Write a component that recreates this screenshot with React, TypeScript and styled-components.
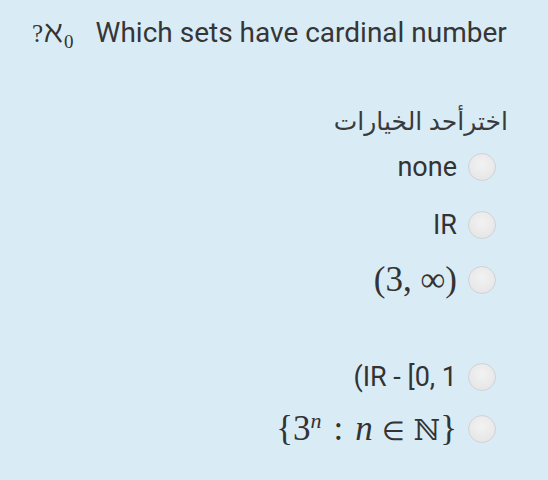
import styled, { createGlobalStyle } from 'styled-components';

const GlobalStyle = createGlobalStyle`
  html, body {
    margin: 0;
    padding: 0;
    background: #d9ecf6;
  }
`;

const Page = styled.div`
  width: 548px;
  height: 480px;
  background: #d9ecf6;
  font-family: Roboto, 'Liberation Sans', sans-serif;
  color: #333;
  overflow: hidden;
`;

const Question = styled.div`
  display: flex;
  align-items: baseline;
  padding: 15px 0 0 32px;
  font-size: 28px;
  line-height: 32px;
  color: #363636;
`;

const Aleph = styled.span`
  font-family: 'DejaVu Serif', 'Liberation Serif', serif;
  font-size: 31px;
  line-height: 32px;
  margin-right: 22px;
  color: #333;

  small {
    font-family: 'Liberation Serif', serif;
    font-size: 25px;
    margin-right: 1px;
  }

  sub {
    font-family: 'Liberation Serif', serif;
    font-size: 19px;
    vertical-align: -6px;
    line-height: 0;
    margin-left: 1px;
  }
`;

const Answer = styled.div`
  display: flex;
  flex-direction: column;
  align-items: flex-end;
  padding-right: 40px;
`;

const Prompt = styled.div`
  font-family: 'Noto Sans', 'DejaVu Sans', sans-serif;
  font-size: 25px;
  line-height: 36px;
  direction: rtl;
  margin-top: 52px;
  color: #3a3a3a;
`;

const Options = styled.div`
  display: flex;
  flex-direction: column;
  align-items: flex-end;
  padding-right: 12px;
`;

const Row = styled.label<{ $gapBefore: number }>`
  display: flex;
  align-items: center;
  justify-content: flex-end;
  gap: 11px;
  height: 50px;
  margin-top: ${p => p.$gapBefore}px;
`;

const Text = styled.span`
  font-size: 27px;
  color: #333;
`;

const Math = styled.span`
  font-family: 'Liberation Serif', 'DejaVu Serif', serif;
  font-size: 35px;
  color: #333;
  white-space: nowrap;

  i {
    font-style: italic;
  }

  sup {
    font-size: 22px;
    font-style: italic;
    vertical-align: 12px;
    line-height: 0;
    margin-right: 12px;
  }
`;

const Op = styled.span<{ $space: number }>`
  display: inline-block;
  margin: 0 ${p => p.$space}px;
  font-family: 'DejaVu Sans', sans-serif;
  font-size: 26px;
  font-weight: 200;
`;

const Bb = styled.span`
  font-family: 'DejaVu Serif', 'DejaVu Sans', serif;
  font-size: 29px;
`;

const Radio = styled.span`
  width: 26px;
  height: 26px;
  border-radius: 50%;
  border: 1px solid #cfd3d6;
  background: radial-gradient(circle at 50% 40%, #f2f2f2 0%, #e3e3e3 100%);
  flex-shrink: 0;
`;

export default function App() {
  return (
    <Page>
      <GlobalStyle />
      <Question>
        <Aleph>
          <small>?</small>ℵ<sub>0</sub>
        </Aleph>
        Which sets have cardinal number
      </Question>
      <Answer>
        <Prompt>اخترأحد الخيارات</Prompt>
        <Options>
          <Row $gapBefore={4}>
            <Text>none</Text>
            <Radio />
          </Row>
          <Row $gapBefore={8}>
            <Text>IR</Text>
            <Radio />
          </Row>
          <Row $gapBefore={5}>
            <Math>(3, ∞)</Math>
            <Radio />
          </Row>
          <Row $gapBefore={47}>
            <Text>(IR - [0, 1</Text>
            <Radio />
          </Row>
          <Row $gapBefore={2}>
            <Math>
              {'{'}3<sup>n</sup>:<Op $space={6} />
              <i>n</i>
              <Op $space={9}>∈</Op>
              <Bb>ℕ</Bb>
              {'}'}
            </Math>
            <Radio />
          </Row>
        </Options>
      </Answer>
    </Page>
  );
}
